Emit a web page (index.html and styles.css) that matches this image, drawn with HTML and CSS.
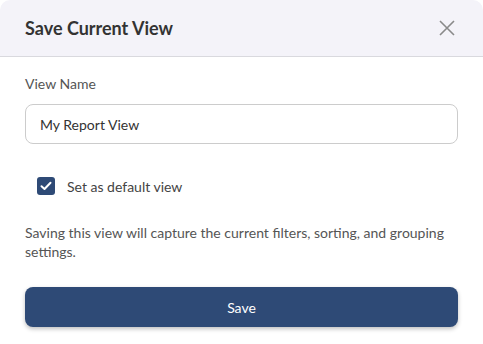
FILE: index.html
```html
<!DOCTYPE html>
<html lang="en">
<head>
    <meta charset="UTF-8">
    <meta name="viewport" content="width=device-width, initial-scale=1.0">
    <title>Save Current View</title>
    <link rel="stylesheet" href="styles.css">
</head>
<body>

<div class="dialog">
    <header class="dialog-header">
        <h2>Save Current View</h2>
        <button class="close-btn" aria-label="Close">
            <svg width="16" height="16" viewBox="0 0 16 16">
                <path d="M1 1 L15 15 M15 1 L1 15" stroke="#8a8a8a" stroke-width="1.6" fill="none"/>
            </svg>
        </button>
    </header>

    <div class="dialog-body">
        <label class="field-label" for="viewName">View Name</label>
        <input id="viewName" class="text-input" type="text" value="My Report View">

        <label class="check-row">
            <span class="check-box">
                <svg width="12" height="10" viewBox="0 0 12 10">
                    <path d="M1.5 5.2 L4.5 8 L10.5 1.8" stroke="white" stroke-width="2" fill="none" stroke-linecap="round" stroke-linejoin="round"/>
                </svg>
            </span>
            <span>Set as default view</span>
        </label>

        <p class="hint">Saving this view will capture the current filters, sorting, and grouping settings.</p>

        <button class="save-btn">Save</button>
    </div>
</div>

</body>
</html>
```

FILE: styles.css
```css
* {
    margin: 0;
    padding: 0;
    box-sizing: border-box;
}

body {
    font-family: Lato, 'Noto Sans', sans-serif;
    background-color: #ffffff;
    color: #333;
}

.dialog {
    width: 100%;
    background-color: #ffffff;
    border-radius: 10px 10px 0 0;
    overflow: hidden;
}

.dialog-header {
    height: 57px;
    background-color: #f4f3f9;
    border-bottom: 1px solid #d9d9de;
    display: flex;
    justify-content: space-between;
    align-items: center;
    padding: 0 28px 0 25px;
}

.dialog-header h2 {
    font-size: 18px;
    font-weight: bold;
    color: #333;
}

.close-btn {
    background: none;
    border: none;
    cursor: pointer;
    display: flex;
}

.dialog-body {
    padding: 18px 25px 20px;
    display: flex;
    flex-direction: column;
}

.field-label {
    font-size: 14px;
    color: #555;
    margin-bottom: 12px;
}

.text-input {
    height: 40px;
    width: 100%;
    padding: 0 14px;
    border: 1px solid #cccccc;
    border-radius: 8px;
    font-family: inherit;
    font-size: 14px;
    color: #333;
    background-color: #fff;
}

.check-row {
    display: flex;
    align-items: center;
    gap: 12px;
    margin: 33px 0 0 12px;
    font-size: 14px;
    color: #444;
}

.check-box {
    width: 18px;
    height: 18px;
    border-radius: 3px;
    background-color: #2e4a76;
    display: flex;
    align-items: center;
    justify-content: center;
}

.hint {
    margin-top: 28px;
    font-size: 14px;
    line-height: 19px;
    color: #555;
}

.save-btn {
    margin-top: 26px;
    height: 40px;
    width: 100%;
    background-color: #2e4a76;
    color: white;
    border: none;
    border-radius: 8px;
    font-family: inherit;
    font-size: 14px;
    cursor: pointer;
    box-shadow: 0 2px 4px rgba(0, 0, 0, 0.25);
}
```
